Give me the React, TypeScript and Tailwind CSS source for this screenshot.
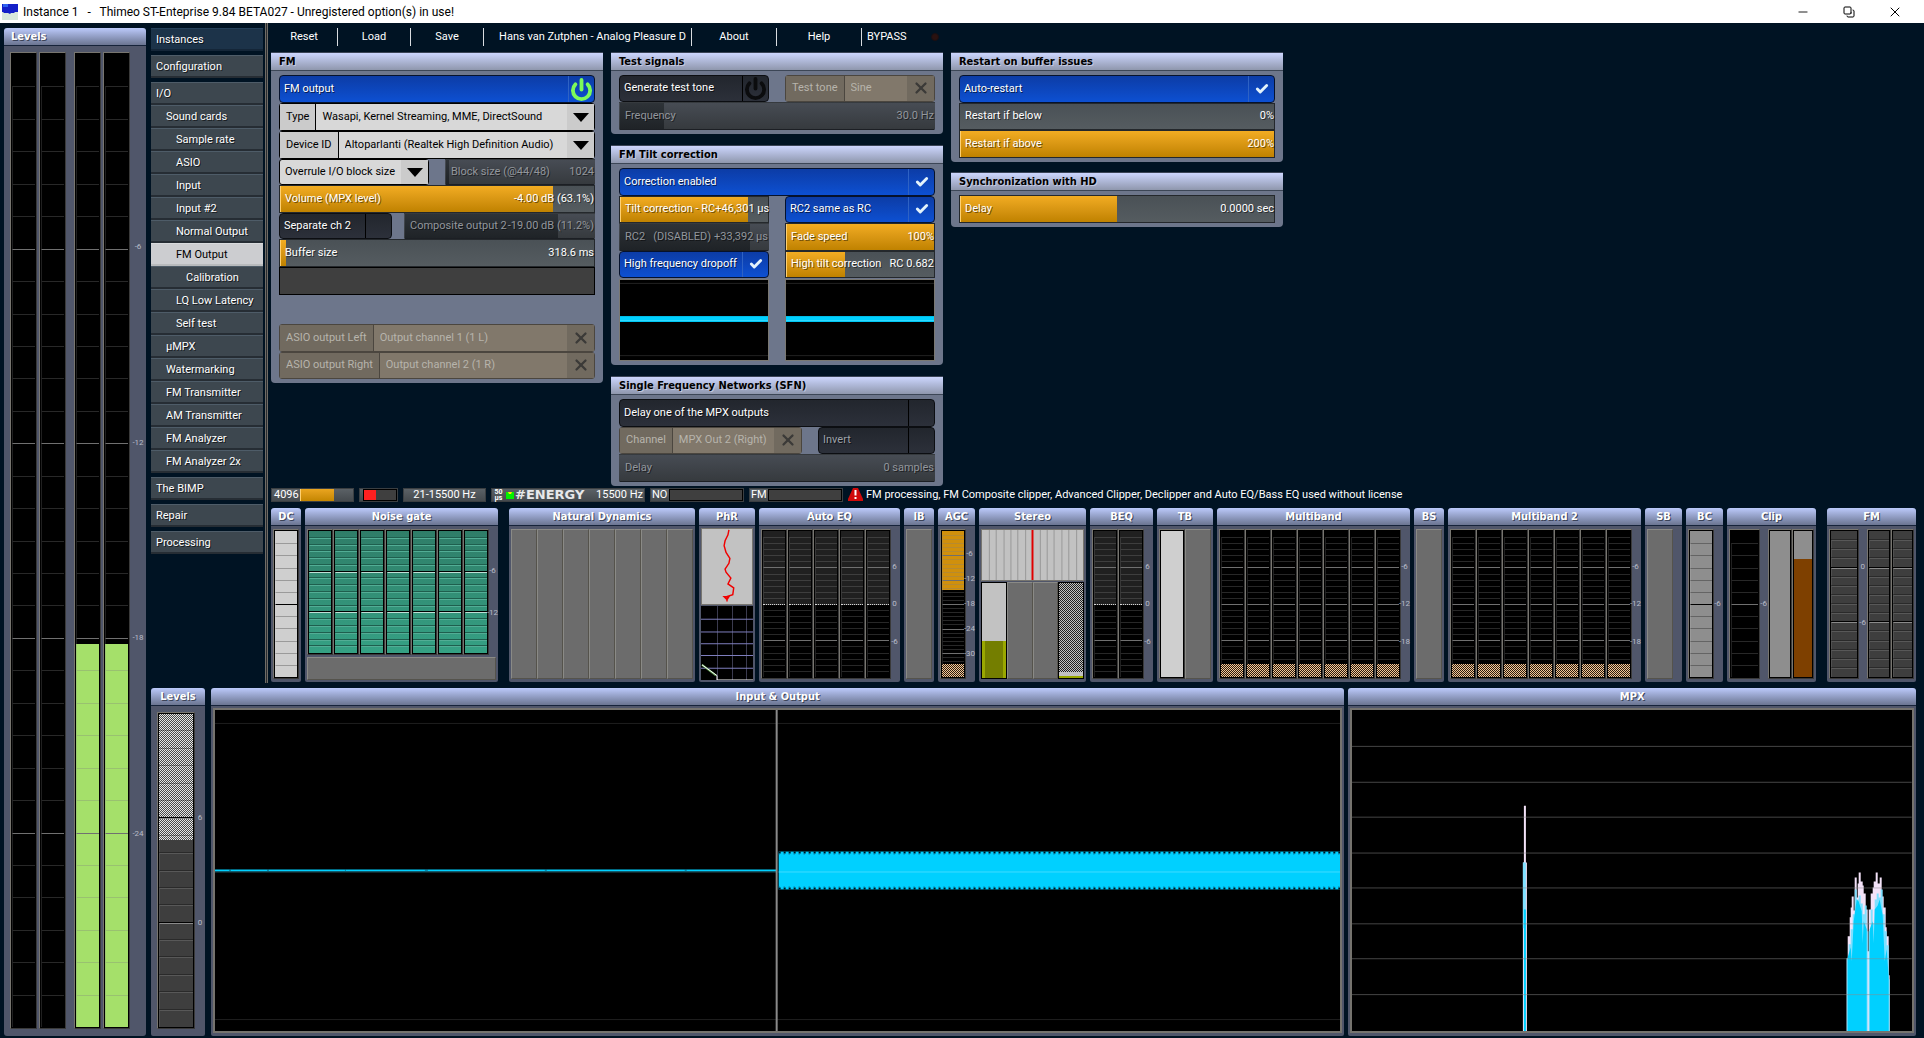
import type { ReactNode } from "react";
import { Check, Copy, Minus, Power, X } from "lucide-react";
import clsx from "clsx";

const navItems = [
  { label: "Instances", level: 0, tone: "dark" },
  { label: "Configuration", level: 0 },
  { label: "I/O", level: 0 },
  { label: "Sound cards", level: 1 },
  { label: "Sample rate", level: 2 },
  { label: "ASIO", level: 2 },
  { label: "Input", level: 2 },
  { label: "Input #2", level: 2 },
  { label: "Normal Output", level: 2 },
  { label: "FM Output", level: 2, tone: "selected" },
  { label: "Calibration", level: 3 },
  { label: "LQ Low Latency", level: 2 },
  { label: "Self test", level: 2 },
  { label: "µMPX", level: 1 },
  { label: "Watermarking", level: 1 },
  { label: "FM Transmitter", level: 1 },
  { label: "AM Transmitter", level: 1 },
  { label: "FM Analyzer", level: 1 },
  { label: "FM Analyzer 2x", level: 1 },
  { label: "The BIMP", level: 0 },
  { label: "Repair", level: 0 },
  { label: "Processing", level: 0 },
];

const indents = ["pl-[5px]", "pl-[15px]", "pl-[25px]", "pl-[35px]"];

const moduleHeader =
  "flex h-[18px] shrink-0 items-center rounded-t-[3px] border-b border-[#16233a] bg-gradient-to-b from-[#bccafc] to-[#6b7591] pt-px font-['DejaVu_Sans_Condensed',sans-serif] text-[11px] font-bold text-white [text-shadow:1px_1px_0_#3b4358]";

/* ---------- meters ---------- */

type Tone = "black" | "gray" | "light" | "silver" | "teal";

// ticks are translucent where a fill can lie behind them
const cellTones: Record<Tone, { bg: string; cell: string; major: string }> = {
  black: { bg: "bg-black", cell: "border-t-[#80808050] border-l-[#80808040]", major: "border-t-[#707070] border-l-[#80808040]" },
  gray: {
    bg: "bg-[#3e3e3e]",
    cell: "border-t-[#ffffff22] border-l-[#ffffff18] shadow-[0_-1px_0_#00000050]",
    major: "border-t-[#8a8a8a] border-l-[#ffffff18] shadow-[0_-1px_0_#000]",
  },
  light: { bg: "bg-[#cfcfcf]", cell: "border-t-[#9a9a9a] border-l-transparent", major: "border-t-black border-l-transparent" },
  silver: { bg: "bg-[#8e8e8e]", cell: "border-t-[#646464] border-l-[#9a9a9a]", major: "border-t-black border-l-[#9a9a9a]" },
  teal: {
    bg: "bg-gradient-to-b from-[#2f7d68] to-[#35a184]",
    cell: "border-t-[#52ad95] border-l-transparent shadow-[0_-1px_0_#1f5f4e]",
    major: "border-t-[#bfe0d6] border-l-transparent shadow-[0_-1px_0_#000]",
  },
};

type MeterProps = {
  cells: number;
  majors?: number[];
  tone?: Tone;
  className?: string;
  children?: ReactNode;
};

function Meter({ cells, majors = [], tone = "black", className = "flex-1", children }: MeterProps) {
  const t = cellTones[tone];
  return (
    <div className={clsx("grid min-w-0 border border-t-[#77756f] border-r-[#3a3a3a] border-b-[#3a3a3a] border-l-[#77756f]", className)}>
      <div className={clsx("col-start-1 row-start-1 border border-black", t.bg)} />
      {children}
      <div className="col-start-1 row-start-1 m-px flex flex-col">
        {Array.from({ length: cells }, (_, i) => (
          <div
            key={i}
            className={clsx(
              "flex-1 border-t border-l",
              i === 0 ? "border-transparent" : majors.includes(i) ? t.major : t.cell
            )}
          />
        ))}
      </div>
    </div>
  );
}

function Fill({ className, percent, top }: { className: string; percent: number; top?: boolean }) {
  return (
    <div
      className={clsx("col-start-1 row-start-1 m-px", top ? "self-start" : "self-end", className)}
      style={{ height: `${percent}%` }}
    />
  );
}

function Scale({ cells, labels, className }: { cells: number; labels: Record<number, string>; className: string }) {
  return (
    <div className={clsx("flex flex-col overflow-visible text-[8px] leading-[8px] text-[#b9bdc9]", className)}>
      {Array.from({ length: cells }, (_, i) => (
        <div key={i} className="flex h-0 flex-1 justify-center whitespace-nowrap">
          {labels[i] && <span className="h-[8px] -translate-y-1/2">{labels[i]}</span>}
        </div>
      ))}
    </div>
  );
}

function Blank({ className = "flex-1" }: { className?: string }) {
  return <div className={clsx("border border-t-[#8a8a86] border-r-[#55534c] border-b-[#55534c] border-l-[#8a8a86] bg-[#6c6c6c]", className)} />;
}

const dither = "bg-[repeating-conic-gradient(#f5c795_0_25%,#2a1c10_0_50%)] bg-[length:2px_2px]";

function Module({ title, className, body, children }: { title: string; className: string; body?: string; children: ReactNode }) {
  return (
    <section className={clsx("flex min-w-0 flex-col", className)}>
      <h2 className={clsx(moduleHeader, "justify-center whitespace-nowrap")}>{title}</h2>
      <div className={clsx("flex min-h-0 flex-1 rounded-b-[2px] bg-[#50566a]", body ?? "px-[2px] pt-[3px] pb-[3px]")}>{children}</div>
    </section>
  );
}

/* ---------- settings controls ---------- */

function Panel({ title, children }: { title: string; children: ReactNode }) {
  return (
    <section className="flex flex-col rounded-b-[4px] bg-[#6d768b] pb-[4px]">
      <h2 className="flex h-[19px] items-center border-t border-b border-t-[#3a4456] border-b-[#3c4656] bg-gradient-to-b from-[#ccd6fe] to-[#8f97ad] pt-px pl-[8px] font-['DejaVu_Sans_Condensed',sans-serif] text-[11px] font-bold text-black [text-shadow:1px_1px_0_#c4cae0]">
        {title}
      </h2>
      <div className="px-[8px] pt-[4px]">{children}</div>
    </section>
  );
}

type ToggleProps = { label: string; on?: boolean; icon?: "check" | "power"; dim?: boolean; className?: string };

function Toggle({ label, on, icon = "check", dim, className }: ToggleProps) {
  return (
    <label
      className={clsx(
        "relative flex min-w-0 items-stretch rounded-[4px] border",
        on
          ? "border-[#06122c] bg-gradient-to-b from-[#0c3ca6] to-[#0d50d2]"
          : "border-[#0c0e12] bg-gradient-to-b from-[#22262d] to-[#2c303a]",
        dim ? "text-[#9da1a8]" : "text-white",
        className
      )}
    >
      <input type="checkbox" defaultChecked={on} className="sr-only" />
      <span className="flex flex-1 items-center pl-[4px] whitespace-nowrap [text-shadow:1px_1px_0_#000000a0]">{label}</span>
      <span className={clsx("flex w-[26px] items-center justify-center border-l", on ? "border-[#2e62c4]" : "border-black")}>
        {icon === "power" && <Power size={23} strokeWidth={4} className={on ? "text-[#7dfa5a]" : "text-[#0b0c0e]"} />}
        {icon === "check" && on && <Check size={14} strokeWidth={5} className="text-[#e4f3fb]" />}
      </span>
    </label>
  );
}

type SliderProps = { label: string; value: string; percent: number; disabled?: boolean; className?: string };

function Slider({ label, value, percent, disabled, className }: SliderProps) {
  return (
    <label
      className={clsx(
        "grid min-w-0 border",
        disabled
          ? "border-transparent border-b-[#1c1f24] bg-gradient-to-b from-[#474c54] to-[#363a3e] text-[#92969c]"
          : "border-[#24282c] bg-gradient-to-b from-[#4a5156] to-[#555c60] text-white",
        className
      )}
    >
      <span
        className={clsx(
          "col-start-1 row-start-1",
          disabled ? "bg-gradient-to-b from-[#2e3338] to-[#1f2327]" : "border-l border-[#ffd070] bg-gradient-to-b from-[#f2ac22] to-[#c08200]",
          percent === 0 && "invisible"
        )}
        style={{ width: `${percent}%` }}
      />
      <span className="col-start-1 row-start-1 flex items-center justify-between pl-[5px] whitespace-pre [text-shadow:1px_1px_0_#00000080]">
        <span>{label}</span>
        <span>{value}</span>
      </span>
      <input type="range" defaultValue={percent} disabled={disabled} aria-label={label} className="col-start-1 row-start-1 h-full w-full min-w-0 opacity-0" />
    </label>
  );
}

type PickerProps = { label?: string; value: string; disabled?: boolean; className?: string };

function Picker({ label, value, disabled, className }: PickerProps) {
  return (
    <label
      className={clsx(
        "flex min-w-0 rounded-[3px] border",
        disabled ? "border-[#4b463f] bg-[#81786b] text-[#b7b4ac]" : "border-black bg-[#d8d8d8] text-black",
        className
      )}
    >
      {label && (
        <span className={clsx("flex shrink-0 items-center border-r px-[6px] whitespace-nowrap", disabled ? "border-[#4b463f] bg-[#716a5f]" : "border-black bg-[#cbcbcb]")}>
          {label}
        </span>
      )}
      <span className="grid min-w-0 flex-1">
        <select
          disabled={disabled}
          aria-label={label ?? value}
          className={clsx("col-start-1 row-start-1 w-full min-w-0 appearance-none bg-transparent opacity-100", label ? "pl-[6px]" : "pl-[5px]")}
        >
          <option>{value}</option>
        </select>
        <span
          className={clsx(
            "pointer-events-none col-start-1 row-start-1 flex w-[27px] items-center justify-center justify-self-end",
            disabled ? "bg-[#716a5f]" : "bg-[#cbcbcb]"
          )}
        >
          {disabled ? (
            <X size={18} strokeWidth={3} className="text-[#3b3a38]" />
          ) : (
            <svg width="16" height="9" viewBox="0 0 16 9">
              <path d="M0 0H16L8 9Z" />
            </svg>
          )}
        </span>
      </span>
    </label>
  );
}

function TiltGraph() {
  return (
    <svg viewBox="0 0 149 82" preserveAspectRatio="none" className="h-full w-full border border-[#7a7872] bg-black">
      <path d="M0 3.5H149M0 77.5H149" stroke="#222" />
      <rect y="37" width="149" height="6" fill="#00d0ff" />
      <path d="M0 41.5H149" stroke="#33d9ff" />
    </svg>
  );
}

/* ---------- page parts ---------- */

function TitleBar() {
  return (
    <header className="flex h-[23px] shrink-0 items-center bg-white pr-[6px] pl-[2px] text-black">
      <svg width="16" height="16" viewBox="0 0 16 16">
        <rect width="16" height="16" fill="#d8e8dc" />
        <path d="M0 0H16V8H13L12 9H9L8 10L6 9H2L1 8H0Z" fill="#1420c8" />
        <path d="M1 0H6V3H1Z" fill="#2f62f0" />
      </svg>
      <h1 className="ml-[5px] flex-1 text-[12px] whitespace-pre">
        Instance 1   -   Thimeo ST-Enteprise 9.84 BETA027 - Unregistered option(s) in use!
      </h1>
      <button aria-label="Minimize" className="flex w-[46px] justify-center"><Minus size={14} strokeWidth={1.5} /></button>
      <button aria-label="Restore" className="flex w-[46px] justify-center"><Copy size={12} strokeWidth={2} className="-scale-x-100 rotate-90" /></button>
      <button aria-label="Close" className="flex w-[46px] justify-center"><X size={16} strokeWidth={1.5} /></button>
    </header>
  );
}

function MainLevels() {
  const majors = [6, 12, 18, 24];
  return (
    <section className="flex w-[142px] shrink-0 flex-col">
      <h2 className={clsx(moduleHeader, "pl-[7px]")}>Levels</h2>
      <div className="flex flex-1 rounded-b-[3px] bg-[#50566a] pt-[6px] pb-[7px] pl-[6px]">
        <Meter cells={30} majors={majors} className="w-[27px]" />
        <Meter cells={30} majors={majors} className="ml-[2px] w-[27px]" />
        {[0, 1].map((i) => (
          <Meter key={i} cells={30} majors={majors} className={clsx("w-[27px]", i === 0 ? "ml-[8px]" : "ml-[2px]")}>
            <Fill percent={39.3} className="bg-[#a5e06a]" />
          </Meter>
        ))}
        <Scale cells={30} labels={{ 6: "-6", 12: "-12", 18: "-18", 24: "-24" }} className="flex-1" />
      </div>
    </section>
  );
}

function NavTree() {
  return (
    <nav className="w-[112px] shrink-0 pt-[5px]">
      {navItems.map((item, i) => (
        <a
          key={item.label}
          href="#"
          className={clsx(
            "flex h-[23px] items-center border-t border-b-2 pt-[2px] whitespace-nowrap",
            indents[item.level],
            item.level === 0 && i > 0 && "mt-[4px]",
            item.tone === "selected"
              ? "border-t-[#d8dadc] border-b-[#b8babc] bg-[#cccdd0] text-black"
              : item.tone === "dark"
                ? "border-t-[#24405a] border-b-[#142638] bg-[#1c3349] text-white [text-shadow:1px_1px_0_#000000a0]"
                : "border-t-[#4e5c68] border-b-[#262d34] bg-[#3d474f] text-white [text-shadow:1px_1px_0_#000000a0]"
          )}
        >
          {item.label}
        </a>
      ))}
    </nav>
  );
}

function MenuBar() {
  const item = "h-[18px] shrink-0 border-r border-[#d8dce0] text-center";
  return (
    <div className="flex h-[29px] shrink-0 pt-[5px] leading-[16px] text-white">
      <button className={clsx(item, "w-[67px]")}>Reset</button>
      <button className={clsx(item, "w-[73px]")}>Load</button>
      <button className={clsx(item, "w-[73px]")}>Save</button>
      <button className={clsx(item, "w-[208px] overflow-hidden pl-[10px] whitespace-nowrap")}>Hans van Zutphen - Analog Pleasure D</button>
      <button className={clsx(item, "w-[85px]")}>About</button>
      <button className={clsx(item, "w-[85px]")}>Help</button>
      <button className="h-[18px] pl-[5px]">BYPASS</button>
      <span className="mt-[5px] ml-[24px] size-[8px] rounded-full border border-[#1a0f12] bg-[#2a1210]" />
    </div>
  );
}

function SettingsPanels() {
  return (
    <div className="flex gap-2">
      <div className="w-[332px]">
        <Panel title="FM">
          <div className="flex h-[220px] flex-col *:flex-1">
            <Toggle label="FM output" on icon="power" />
            <Picker label="Type" value="Wasapi, Kernel Streaming, MME, DirectSound" />
            <Picker label="Device ID" value="Altoparlanti (Realtek High Definition Audio)" />
            <div className="grid grid-cols-2 gap-4">
              <Picker value="Overrule I/O block size" />
              <Slider label="Block size (@44/48)" value="1024" percent={2} disabled />
            </div>
            <Slider label="Volume (MPX level)" value="-4.00 dB (63.1%)" percent={87} />
            <div className="flex gap-3">
              <Toggle label="Separate ch 2" className="w-[113px]" />
              <Slider label="Composite output 2" value="-19.00 dB (11.2%)" percent={81} disabled className="flex-1" />
            </div>
            <Slider label="Buffer size" value="318.6 ms" percent={2} />
            <div className="border border-black bg-[#3f3f3f]" />
          </div>
          <div className="mt-[29px] flex h-[55px] flex-col *:flex-1">
            <Picker label="ASIO output Left" value="Output channel 1 (1 L)" disabled />
            <Picker label="ASIO output Right" value="Output channel 2 (1 R)" disabled />
          </div>
        </Panel>
      </div>

      <div className="flex w-[332px] flex-col gap-[11px]">
        <Panel title="Test signals">
          <div className="flex h-[55px] flex-col *:flex-1">
            <div className="grid grid-cols-2 gap-4">
              <Toggle label="Generate test tone" icon="power" />
              <Picker label="Test tone" value="Sine" disabled />
            </div>
            <Slider label="Frequency" value="30.0 Hz" percent={14} disabled />
          </div>
        </Panel>
        <Panel title="FM Tilt correction">
          <div className="grid h-[110px] grid-cols-2 grid-rows-4 gap-x-4">
            <Toggle label="Correction enabled" on className="col-span-2" />
            <Slider label="Tilt correction - RC" value="+46,301 µs" percent={86} />
            <Toggle label="RC2 same as RC" on />
            <Slider label="RC2   (DISABLED)" value="+33,392 µs" percent={88} disabled />
            <Slider label="Fade speed" value="100%" percent={100} />
            <Toggle label="High frequency dropoff" on />
            <Slider label="High tilt correction   RC" value="0.682" percent={40} />
          </div>
          <div className="mt-px grid h-[82px] grid-cols-2 gap-4">
            <TiltGraph />
            <TiltGraph />
          </div>
        </Panel>
        <Panel title="Single Frequency Networks (SFN)">
          <div className="flex h-[83px] flex-col *:flex-1">
            <Toggle label="Delay one of the MPX outputs" />
            <div className="flex gap-4">
              <Picker label="Channel" value="MPX Out 2 (Right)" disabled className="flex-1" />
              <Toggle label="Invert" dim className="w-[117px]" />
            </div>
            <Slider label="Delay" value="0 samples" percent={0} disabled />
          </div>
        </Panel>
      </div>

      <div className="flex w-[332px] flex-col gap-[10px]">
        <Panel title="Restart on buffer issues">
          <div className="flex h-[83px] flex-col *:flex-1">
            <Toggle label="Auto-restart" on />
            <Slider label="Restart if below" value="0%" percent={0} />
            <Slider label="Restart if above" value="200%" percent={100} />
          </div>
        </Panel>
        <Panel title="Synchronization with HD">
          <div className="flex h-[28px] flex-col *:flex-1">
            <Slider label="Delay" value="0.0000 sec" percent={50} />
          </div>
        </Panel>
      </div>
    </div>
  );
}

function StatusRow() {
  const box = "flex h-[14px] shrink-0 items-center border border-[#3b3f42] bg-gradient-to-b from-[#5b6166] to-[#454a4e] whitespace-nowrap leading-[12px]";
  return (
    <div className="mt-[2px] flex h-[14px] text-white">
      <div className={clsx(box, "w-[83px] pl-[2px]")}>
        4096
        <span className="ml-px h-full w-[34px] border-l border-[#ffd070] bg-gradient-to-b from-[#eaa51f] to-[#c48600]" />
      </div>
      <div className={clsx(box, "ml-[5px] w-[39px] pl-[3px]")}>
        <span className="flex h-[12px] w-[35px] border border-black bg-[#3f3f3f]">
          <span className="w-[12px] bg-[#ff2020]" />
        </span>
      </div>
      <div className={clsx(box, "ml-[5px] w-[83px] justify-center")}>21-15500 Hz</div>
      <div className={clsx(box, "ml-[5px] w-[154px] pr-px pl-px")}>
        <span className="w-[11px] text-center text-[7px] leading-[6px] font-bold">50<br />µs</span>
        <svg width="8" height="7" viewBox="0 0 8 7" className="ml-[2px]">
          <rect width="8" height="7" fill="#00f000" />
          <path d="M2 0H6L5 2H3Z" fill="#f0f000" />
        </svg>
        <span className="ml-px flex-1 font-['DejaVu_Sans',sans-serif] text-[13px] font-bold text-[#e6e8ea]">#ENERGY</span>
        15500 Hz
      </div>
      <div className={clsx(box, "ml-[5px] w-[94px] pl-px")}>
        <span className="w-[17px]">NO</span>
        <span className="h-[12px] flex-1 border border-black bg-[#3f3f3f]" />
      </div>
      <div className={clsx(box, "ml-[5px] w-[94px] pl-px")}>
        <span className="w-[17px]">FM</span>
        <span className="h-[12px] flex-1 border border-black bg-[#3f3f3f]" />
      </div>
      <svg width="15" height="13" viewBox="0 0 15 13" className="ml-[5px]">
        <path d="M5 0H10L15 11V13H0V11Z" fill="#d00a0a" />
        <path d="M6.500 2H8.500V7.500H6.500ZM6.500 9H8.500V11H6.500Z" fill="#fff" />
      </svg>
      <p className="ml-[3px] leading-[14px] whitespace-nowrap">
        FM processing, FM Composite clipper, Advanced Clipper, Declipper and Auto EQ/Bass EQ used without license
      </p>
    </div>
  );
}

function repeat(count: number, render: (i: number) => ReactNode) {
  return Array.from({ length: count }, (_, i) => render(i));
}

function EqMeter() {
  return (
    <Meter cells={24} majors={[6, 18]}>
      <Fill percent={50} top className="border-b border-dotted border-white bg-[#202020]" />
    </Meter>
  );
}

function MultibandModule({ title }: { title: string }) {
  return (
    <Module title={title} className="flex-[193]">
      {repeat(7, (i) => (
        <Meter key={i} cells={24} majors={[6, 12, 18]}>
          <Fill percent={9} className={clsx(dither, "z-10")} />
        </Meter>
      ))}
      <Scale cells={24} labels={{ 6: "-6", 12: "-12", 18: "-18" }} className="w-[7px]" />
    </Module>
  );
}

function ProcessingModules() {
  return (
    <div className="mt-[6px] flex h-[174px] gap-1">
      <Module title="DC" className="flex-[30]">
        <Meter cells={12} majors={[6]} tone="light" />
      </Module>
      <Module title="Noise gate" className="flex-[193]" body="flex-col px-[2px] pt-[3px] pb-[2px]">
        <div className="flex flex-1">
          {repeat(7, (i) => (
            <Meter key={i} cells={18} majors={[6, 12]} tone="teal" />
          ))}
          <Scale cells={18} labels={{ 6: "-6", 12: "-12" }} className="w-[7px]" />
        </div>
        <div className="mt-[2px] flex h-[23px]">
          <Blank />
        </div>
      </Module>
      <Module title="Natural Dynamics" className="ml-[7px] flex-[186]">
        {repeat(7, (i) => (
          <Blank key={i} />
        ))}
      </Module>
      <Module title="PhR" className="flex-[56]" body="flex-col px-[2px] pt-[2px] pb-[2px]">
        <svg viewBox="0 0 52 76" preserveAspectRatio="none" className="h-0 w-full flex-1 border border-[#77756f] bg-[#c2c2c2]">
          <path
            d="M28 1L27 6L24 12L23 17L25 24L29 30L28 35L24 41L25 44L30 50L27 56L33 60L32 67L26 69L26 74M23 69H28L26 72Z"
            fill="none"
            stroke="#f00000"
            strokeWidth="1.500"
          />
        </svg>
        <svg viewBox="0 0 52 76" preserveAspectRatio="none" className="mt-px h-0 w-full flex-1 bg-black">
          <path d="M16.500 0V76M31.500 0V76M45.500 0V76" stroke="#3c3c50" />
          <path d="M0 13.500H52M0 26.500H52M0 38.500H52M0 50.500H52M0 63.500H52" stroke="#8080c0" />
          <path d="M1 60L15 71" stroke="#5f9a50" strokeWidth="2" />
          <path d="M1 60L16 71V75.500H52" fill="none" stroke="#fff" />
        </svg>
      </Module>
      <Module title="Auto EQ" className="flex-[141]">
        {repeat(5, (i) => (
          <EqMeter key={i} />
        ))}
        <Scale cells={24} labels={{ 6: "6", 12: "0", 18: "-6" }} className="w-[7px]" />
      </Module>
      <Module title="IB" className="flex-[30]">
        <Blank />
      </Module>
      <Module title="AGC" className="flex-[37]">
        <Meter cells={36} majors={[6, 12, 18, 24, 30]}>
          <Fill percent={40} top className="bg-[#d0900c]" />
          <Fill percent={9} className={clsx(dither, "z-10")} />
        </Meter>
        <Scale cells={36} labels={{ 6: "-6", 12: "-12", 18: "-18", 24: "-24", 30: "-30" }} className="w-[7px]" />
      </Module>
      <Module title="Stereo" className="flex-[107]" body="flex-col px-[2px] pt-[3px] pb-[3px]">
        <svg viewBox="0 0 103 52" preserveAspectRatio="none" className="h-[52px] w-full border border-[#77756f] bg-[#c2c2c2]">
          <path d="M7.500 0V52M14.500 0V52M22.500 0V52M29.500 0V52M36.500 0V52M44.500 0V52M59.500 0V52M66.500 0V52M73.500 0V52M81.500 0V52M88.500 0V52M96.500 0V52" stroke="#989898" />
          <path d="M51.500 0V52" stroke="#e00000" strokeWidth="2" />
        </svg>
        <div className="mt-px flex flex-1">
          <div className="flex flex-1 items-end border border-black bg-[#c2c2c2]">
            <div className="flex h-[37px] flex-1 bg-[#9aa800] px-[3px]">
              <div className="flex-1 bg-[#747e00]" />
            </div>
          </div>
          <Blank />
          <Blank />
          <div className="flex flex-1 flex-col border border-black bg-[#c2c2c2]">
            <div className="flex-1 bg-[repeating-conic-gradient(#c2c2c2_0_25%,#202020_0_50%)] bg-[length:2px_2px]" />
            <div className="mt-[4px] h-[2px] bg-[#9aa800]" />
          </div>
        </div>
      </Module>
      <Module title="BEQ" className="flex-[63]">
        <EqMeter />
        <EqMeter />
        <Scale cells={24} labels={{ 6: "6", 12: "0", 18: "-6" }} className="w-[7px]" />
      </Module>
      <Module title="TB" className="flex-[56]">
        <Meter cells={1} tone="light" />
        <Blank />
      </Module>
      <MultibandModule title="Multiband" />
      <Module title="BS" className="flex-[30]">
        <Blank />
      </Module>
      <MultibandModule title="Multiband 2" />
      <Module title="SB" className="flex-[37]">
        <Blank />
        <div className="w-[7px]" />
      </Module>
      <Module title="BC" className="flex-[37]">
        <Meter cells={12} majors={[6]} tone="silver" />
        <Scale cells={12} labels={{ 6: "-6" }} className="w-[7px]" />
      </Module>
      <Module title="Clip" className="flex-[89]">
        <Meter cells={12} majors={[6]} className="flex-[31]" />
        <Scale cells={12} labels={{ 6: "-6" }} className="w-[8px]" />
        <Meter cells={1} tone="silver" className="flex-[24]" />
        <Meter cells={1} tone="silver" className="flex-[22]">
          <Fill percent={80} className="bg-[#7e4000]" />
        </Meter>
      </Module>
      <Module title="FM" className="ml-[7px] flex-[89]">
        <Meter cells={16} majors={[4, 10]} tone="gray" className="flex-[30]" />
        <Scale cells={16} labels={{ 4: "0", 10: "-6" }} className="w-[8px]" />
        <Meter cells={16} majors={[4, 10]} tone="gray" className="flex-[24]" />
        <Meter cells={16} majors={[4, 10]} tone="gray" className="flex-[23]" />
      </Module>
    </div>
  );
}

function InputOutputScope() {
  return (
    <svg viewBox="0 0 1126 322" preserveAspectRatio="none" className="h-0 min-h-full w-full bg-black">
      <path d="M0 13.500H1126M0 310.500H1126" stroke="#1e1e1e" />
      <path d="M0 161H562" stroke="#00d0ff" strokeWidth="2" />
      <path d="M0 162.500H562" stroke="#20505c" />
      <path d="M14 160.500H16M52 160.500H54M130 160.500H131M210 160.500H213M330 160.500H332M470 160.500H472" stroke="#0a4a60" />
      <rect x="564" y="142" width="562" height="38" fill="#00d0ff" />
      <path d="M564 162.500H1126" stroke="#40dcff" />
      <path d="M564 143H1126M564 179H1126" stroke="#02141e" strokeWidth="2" strokeDasharray="2 3" />
      <path d="M564 144.500H1126M564 177.500H1126" stroke="#0a6c90" strokeDasharray="1 4" />
      <path d="M562 0V322" stroke="#8a8a8a" strokeWidth="2" />
    </svg>
  );
}

function MpxSpectrum() {
  return (
    <svg viewBox="0 0 560 322" preserveAspectRatio="none" className="h-0 min-h-full w-full bg-black">
      <path d="M171 322V219H171V153H172V96H174V153H175V219H175V322Z" fill="#f3e2f8" />
      <path d="M171 153H174V219H174V322H172V219H171Z" fill="#7fe0ff" />
      <path d="M173 200V322" stroke="#00d0ff" strokeWidth="2" />
      <path
        d="M495 322V249H496V227H498V208H499V198H500V187H502V201H503V168H505V188H506V174H507V163H509V172H511V176H512V184H514V200H516V242H517V200H519V184H521V178H522V172H524V163H526V174H528V168H530V187H532V198H534V218H535V227H537V266H538V322Z"
        fill="#f3e2f8"
      />
      <path
        d="M495 322V249H497V235H499V220H501V205H503V180H505V190H507V186H509V194H511V205H513V196H515V222H516V322H517V222H519V200H521V214H523V190H525V184H527V188H529V180H531V205H533V222H535V236H537V270H538V322Z"
        fill="#7fe0ff"
      />
      <path
        d="M496 322V248L499 238L500 252L502 212L505 190L507 192L510 202L511 234L512 212L515 220V322ZM518 322V220L521 212L522 234L523 200L526 196L528 190L531 206L533 252L535 240L537 268V322Z"
        fill="#00d0ff"
      />
      <path
        d="M0 36.500H560M0 72.500H560M0 107.500H560M0 143.500H560M0 178.500H560M0 214.500H560M0 249.500H560M0 285.500H560"
        stroke="#8a8a8a"
        strokeOpacity="0.500"
      />
    </svg>
  );
}

function Scopes() {
  const frame = "grid flex-1 border-2 border-[#75736e]";
  return (
    <div className="flex min-h-[300px] flex-1 pt-[5px]">
      <Module title="Levels" className="w-[54px] shrink-0" body="pt-[6px] pb-[7px] pl-[6px]">
        <Meter cells={18} majors={[6, 12]} tone="gray" className="w-[38px]">
          <Fill percent={40} top className="bg-[repeating-conic-gradient(#e6e6e6_0_25%,#4a4a4a_0_50%)] bg-[length:2px_2px]" />
        </Meter>
        <Scale cells={18} labels={{ 6: "6", 12: "0" }} className="flex-1" />
      </Module>
      <Module title="Input &amp; Output" className="ml-[6px] flex-[1134]" body="px-[2px] pt-[2px] pb-[3px]">
        <div className={frame}>
          <InputOutputScope />
        </div>
      </Module>
      <Module title="MPX" className="mr-[2px] ml-1 flex-[568]" body="px-[2px] pt-[2px] pb-[3px]">
        <div className={frame}>
          <MpxSpectrum />
        </div>
      </Module>
    </div>
  );
}

export default function App() {
  return (
    <div className="flex min-h-screen flex-col bg-[#001323] font-['Roboto',sans-serif] text-[11px]">
      <TitleBar />
      <div className="flex flex-1 pr-[6px] pb-[2px] pl-[4px]">
        <div className="flex pt-[5px]">
          <MainLevels />
        </div>
        <main className="ml-[5px] flex min-w-0 flex-1 flex-col">
          <div className="flex">
            <NavTree />
            <div className="ml-[2px] w-[3px] border-x border-[#6f6c66] bg-[#2a2c30]" />
            <div className="ml-[3px] min-w-0 flex-1 pr-[2px] pb-px">
              <MenuBar />
              <SettingsPanels />
              <StatusRow />
              <ProcessingModules />
            </div>
          </div>
          <Scopes />
        </main>
      </div>
    </div>
  );
}
